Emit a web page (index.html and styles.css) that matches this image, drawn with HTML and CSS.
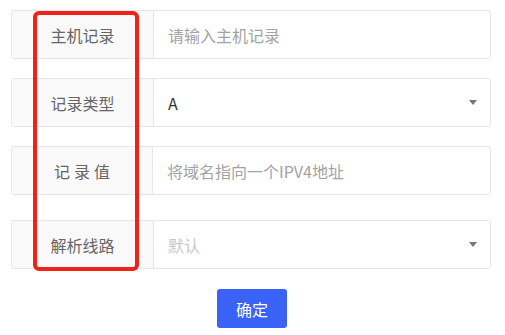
FILE: index.html
```html
<!DOCTYPE html>
<html lang="zh-CN">
<head>
    <meta charset="UTF-8">
    <meta name="viewport" content="width=device-width, initial-scale=1.0">
    <title>添加记录</title>
    <link rel="stylesheet" href="styles.css">
</head>
<body>

    <div class="record-form">
        <!-- 主机记录 -->
        <div class="form-row">
            <div class="form-label">主机记录</div>
            <div class="form-field placeholder">请输入主机记录</div>
        </div>

        <!-- 记录类型 -->
        <div class="form-row">
            <div class="form-label">记录类型</div>
            <div class="form-field select">A<span class="caret"></span></div>
        </div>

        <!-- 记录值 -->
        <div class="form-row">
            <div class="form-label spaced">记录值</div>
            <div class="form-field placeholder">将域名指向一个IPV4地址</div>
        </div>

        <!-- 解析线路 -->
        <div class="form-row last">
            <div class="form-label">解析线路</div>
            <div class="form-field select muted">默认<span class="caret"></span></div>
        </div>

        <div class="actions">
            <button class="btn-primary">确定</button>
        </div>

        <!-- highlight around the labels -->
        <div class="highlight"></div>
    </div>

</body>
</html>
```

FILE: styles.css
```css
body {
    margin: 0;
    padding: 10px 0 0 11px;
    background: #fff;
    font-family: "Noto Sans CJK SC", "Noto Sans", sans-serif;
    font-size: 16px;
}

.record-form {
    position: relative;
    width: 480px;
}

.form-row {
    display: flex;
    height: 49px;
    box-sizing: border-box;
    border: 1px solid #e6e6e6;
    border-radius: 3px;
    margin-bottom: 19px;
}

.form-row:nth-child(3) {
    margin-bottom: 25px;
}

.form-row.last {
    margin-bottom: 0;
}

.form-label {
    width: 141px;
    flex-shrink: 0;
    background: #f9f9f9;
    border-right: 1px solid #e6e6e6;
    color: #666;
    display: flex;
    align-items: center;
    justify-content: center;
}

.form-label.spaced {
    letter-spacing: 4px;
    padding-left: 4px;
    box-sizing: border-box;
}

.form-field {
    flex: 1;
    display: flex;
    align-items: center;
    padding: 0 14px;
    color: #333;
    position: relative;
}

.form-field.placeholder {
    color: #a3a3a3;
}

.form-field.muted {
    color: #c8c8c8;
}

.caret {
    position: absolute;
    right: 13px;
    top: 21px;
    width: 0;
    height: 0;
    border-left: 4px solid transparent;
    border-right: 4px solid transparent;
    border-top: 5px solid #777;
}

.actions {
    display: flex;
    justify-content: center;
    margin-top: 20px;
    padding-left: 2px;
}

.btn-primary {
    width: 70px;
    height: 39px;
    border: none;
    border-radius: 3px;
    background: #3a62f6;
    color: #fff;
    font-family: inherit;
    font-size: 16px;
    cursor: pointer;
}

.highlight {
    position: absolute;
    left: 22px;
    top: 1px;
    width: 106px;
    height: 260px;
    box-sizing: border-box;
    border: 4px solid #ef2218;
    border-radius: 6px;
}
```
